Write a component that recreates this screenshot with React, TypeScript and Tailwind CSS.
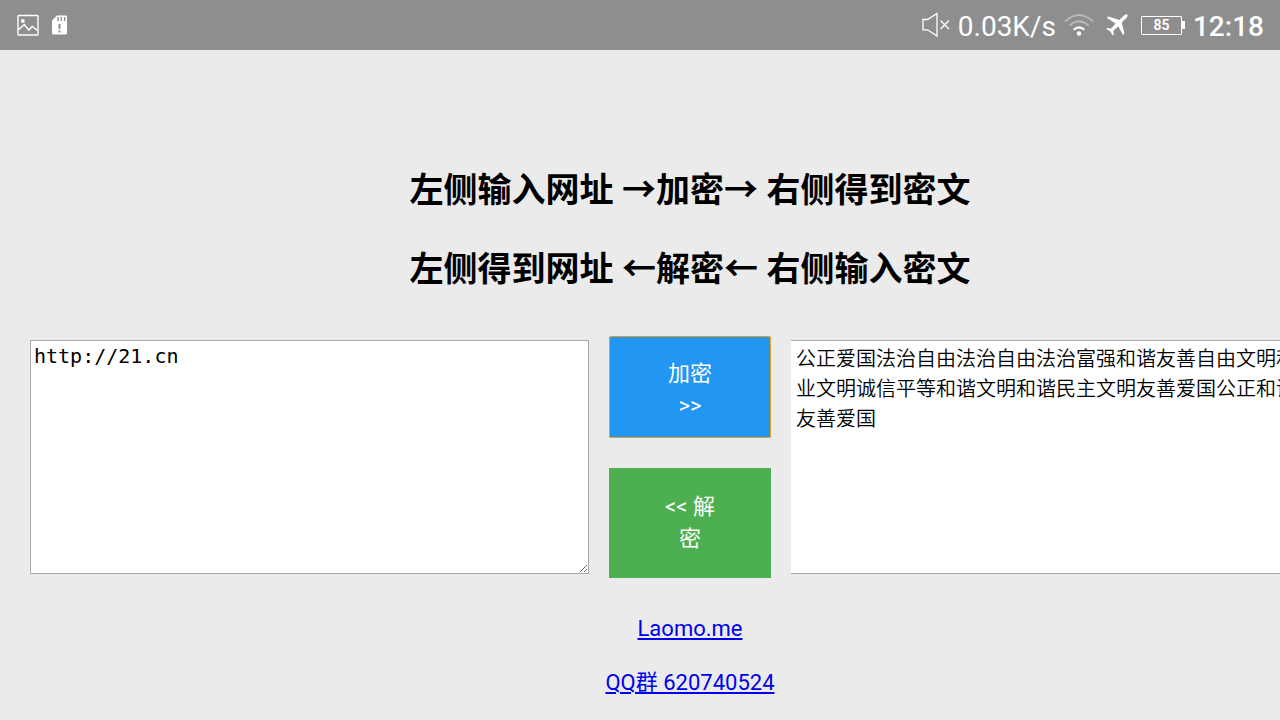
import { useState } from 'react';

const CIPHER_TEXT =
  '公正爱国法治自由法治自由法治富强和谐友善自由文明和谐敬业文明诚信平等和谐文明和谐民主文明友善爱国公正和谐公正友善爱国';

function StatusBar() {
  return (
    <header className="flex h-[50px] items-center justify-between bg-[#8e8e8e] px-4 text-white">
      <div className="flex items-center gap-3">
        {/* screenshot saved */}
        <svg width="24" height="24" viewBox="0 0 24 24" fill="none" stroke="currentColor">
          <rect x="2" y="2.5" width="20" height="19.5" rx="0.8" strokeWidth="1.4" />
          <circle cx="6.8" cy="8" r="1.9" fill="currentColor" stroke="none" />
          <path d="M2.8 16.5 L8.3 11.5 L12.8 17 L16.2 13.5 L21.4 17.5" strokeWidth="1.5" />
        </svg>
        {/* sd card */}
        <svg width="15" height="20" viewBox="0 0 15 20">
          <path d="M5 0.5 H14 Q15 0.5 15 1.5 V18 Q15 19.5 13.5 19.5 H1.5 Q0 19.5 0 18 V5.5 Z" fill="currentColor" />
          <path d="M6 2 V6 M9.3 2 V6 M12.6 2 V6" stroke="#8e8e8e" strokeWidth="1.4" />
          <path d="M7.5 9 V14 M7.5 15.5 V17.5" stroke="#8e8e8e" strokeWidth="2" />
        </svg>
      </div>

      <div className="flex items-center">
        {/* muted */}
        <svg className="mr-2" width="28" height="26" viewBox="0 0 28 26" fill="none" stroke="currentColor" strokeWidth="1.3">
          <path d="M1 7.5 H5.5 L15 1.5 V24 L5.5 17.8 H1 Z" />
          <path d="M18.5 8.5 L27 17 M27 8.5 L18.5 17" />
        </svg>
        <span className="pt-[3px] text-[28px] leading-[50px]">0.03K/s</span>
        {/* wifi */}
        <svg className="ml-2" width="30" height="24" viewBox="0 0 30 24" fill="none" strokeWidth="2">
          <path d="M1 8.5 Q15 -4.5 29 8.5" stroke="#b6b6b6" />
          <path d="M5.3 12.8 Q15 4 24.7 12.8" stroke="#b6b6b6" />
          <path d="M9.7 16.7 Q15 12 20.3 16.7" stroke="currentColor" />
          <circle cx="15" cy="20.5" r="2.2" fill="currentColor" />
        </svg>
        {/* airplane mode */}
        <svg className="ml-3" width="22" height="22" viewBox="0 0 22 22" fill="currentColor">
          <path d="M21.4 0.4 C20.4 -0.1 19 0.5 17.9 1.6 L13.4 6 L2.4 2.6 L0.9 4 L9.6 9.5 L5.2 14.5 L1.4 14 L0.2 15.1 L4.4 17.4 L6.6 21.4 L7.8 20.3 L7.4 16.7 L12.3 12.2 L17 20.9 L18.5 19.4 L15.7 8.5 L20.3 4 C21.4 2.9 21.9 1.4 21.4 0.4 Z" />
        </svg>
        {/* battery */}
        <div className="ml-[13px] flex items-center">
          <span className="flex h-[19px] w-[41px] items-center justify-center rounded-[1px] border border-white text-sm font-semibold">
            85
          </span>
          <span className="h-2 w-[3px] bg-white" />
        </div>
        <span className="ml-2 pt-[3px] text-[28px] leading-[50px] font-medium">12:18</span>
      </div>
    </header>
  );
}

export default function App() {
  const [url, setUrl] = useState('http://21.cn');
  const [cipher, setCipher] = useState(CIPHER_TEXT);

  return (
    <div className="min-h-screen overflow-x-hidden bg-[#ebebeb] font-['Roboto','Noto_Sans_CJK_SC',sans-serif] text-black">
      <StatusBar />

      {/* content is wider than the screen and runs off to the right */}
      <main className="w-[calc(100%+100px)] px-[30px] pt-[115px] pb-2">
        <div className="space-y-[29px] text-center text-[34px] leading-[50px] font-bold">
          <h2>左侧输入网址 →加密→ 右侧得到密文</h2>
          <h2>左侧得到网址 ←解密← 右侧输入密文</h2>
        </div>

        <div className="mt-[42px] grid grid-cols-[1fr_162px_1fr] items-center gap-5">
          <textarea
            aria-label="网址"
            value={url}
            onChange={e => setUrl(e.target.value)}
            className="h-[234px] w-full resize border border-[#a9a9a9] bg-white px-[3px] py-[3px] font-['DejaVu_Sans_Mono',monospace] text-xl leading-6 focus:outline-none"
          />

          <div className="flex flex-col gap-[30px] text-[22px] leading-8 text-white">
            <button
              type="button"
              className="rounded-[2px] border border-[#e5a01f] bg-[#2196f3] px-12 pt-[21px] pb-[15px]"
            >
              加密 &gt;&gt;
            </button>
            <button type="button" className="bg-[#4caf50] px-12 py-[23px]">
              &lt;&lt; 解密
            </button>
          </div>

          <textarea
            aria-label="密文"
            value={cipher}
            onChange={e => setCipher(e.target.value)}
            className="h-[234px] w-full resize border border-l-0 border-[#a9a9a9] bg-white px-[5px] py-[2px] font-['Noto_Sans_CJK_SC',sans-serif] text-xl leading-[30px] font-[350] focus:outline-none"
          />
        </div>

        <div className="mt-[35px] flex flex-col items-center gap-[22px] text-[22px] leading-8 text-[#0000ee]">
          <a href="#laomo" className="underline">Laomo.me</a>
          <a href="#qq" className="underline">QQ群 620740524</a>
        </div>
      </main>
    </div>
  );
}
